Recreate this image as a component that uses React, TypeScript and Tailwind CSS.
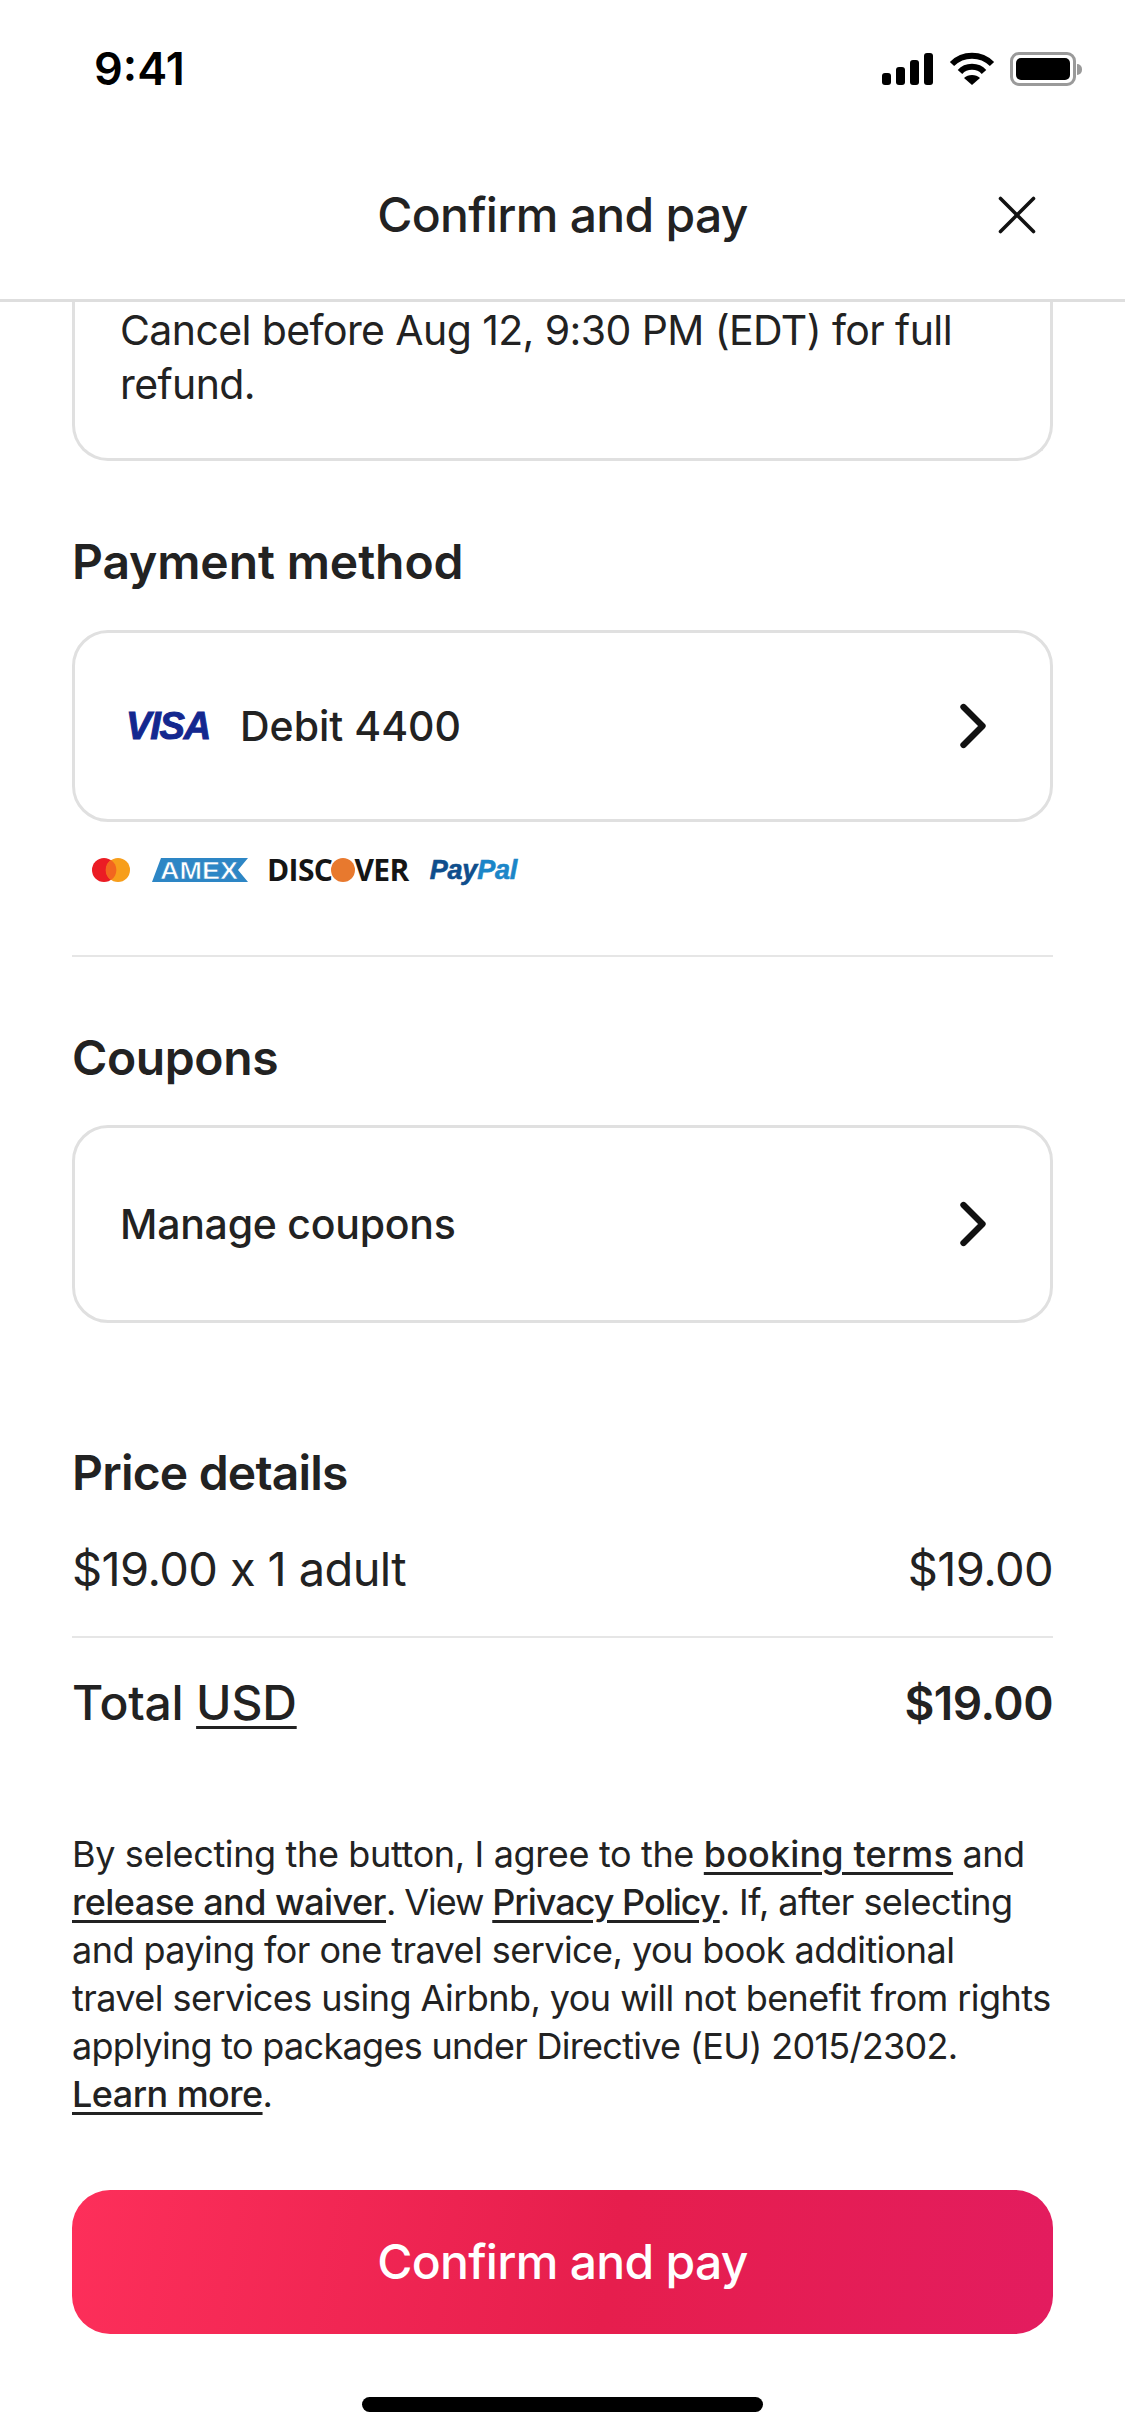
import React from 'react';
import { ChevronRight, X } from 'lucide-react';

const font = 'font-["Inter",sans-serif]';
const link = 'font-medium underline underline-offset-[5px] decoration-[3px]';

function StatusIcons() {
  return (
    <div className="flex items-center gap-[15px]">
      <svg width="52" height="32" viewBox="0 0 52 32" fill="#000">
        <rect x="0" y="20" width="9" height="12" rx="3" />
        <rect x="14" y="14" width="9" height="18" rx="3" />
        <rect x="28" y="7" width="9" height="25" rx="3" />
        <rect x="42" y="0" width="9" height="32" rx="3" />
      </svg>
      <svg width="46" height="34" viewBox="0 0 46 34" fill="none" stroke="#000" strokeWidth="6">
        <path d="M3 12 C14 1 32 1 43 12" />
        <path d="M11 20 C17 13 29 13 35 20" />
        <path d="M23 33 L15 26 C19 22 27 22 31 26 Z" fill="#000" stroke="none" />
      </svg>
      <div className="flex items-center">
        <div className="w-[66px] h-[34px] rounded-[9px] border-[3px] border-[#9a9a9a] p-[3px]">
          <div className="w-full h-full bg-black rounded-[5px]" />
        </div>
        <div className="w-[5px] h-[11px] bg-[#9a9a9a] rounded-r-full ml-[1px]" />
      </div>
    </div>
  );
}

function VisaLogo() {
  return (
    <span className='w-[84px] text-[#14288f] italic font-bold text-[38px] leading-none tracking-[-1.2px] [-webkit-text-stroke:1px_#14288f] font-["Liberation_Sans",sans-serif]'>
      VISA
    </span>
  );
}

function CardLogos() {
  return (
    <div className="flex items-center pl-[20px] pt-[33px]">
      <svg width="38" height="24" viewBox="0 0 38 24" className="mr-[22px]">
        <circle cx="12" cy="12" r="12" fill="#eb1c24" />
        <circle cx="26" cy="12" r="12" fill="#f79e1b" />
        <path d="M19 2 a12 12 0 0 1 0 20 a12 12 0 0 1 0 -20" fill="#f2661f" />
      </svg>
      <svg width="96" height="24" viewBox="0 0 96 24" className="mr-[19px]">
        <path d="M9 0 H96 L86 12 L96 24 H0 Z" fill="#2d86c5" />
        <text x="47" y="20.5" textAnchor="middle" fontFamily="Liberation Sans" fontWeight="700" fontSize="23" fill="#fff" stroke="#2d86c5" strokeWidth="0.6" textLength="78" lengthAdjust="spacingAndGlyphs">AMEX</text>
      </svg>
      <span className='flex items-center text-[#151515] font-bold text-[30px] leading-none tracking-[-0.6px] font-["Open_Sans",sans-serif] mr-[21px]'>
        DISC
        <span className="w-[24px] h-[24px] rounded-full bg-[#e8792e] mx-[-1px]" />
        VER
      </span>
      <span className='italic font-bold text-[27px] leading-none tracking-[-0.2px] [-webkit-text-stroke:0.6px] font-["Liberation_Sans",sans-serif]'>
        <span className="text-[#0f4e8c]">Pay</span>
        <span className="text-[#1b86c8]">Pal</span>
      </span>
    </div>
  );
}

function LinkRow({ children, height }: { children: React.ReactNode; height: string }) {
  return (
    <div className={`${height} flex items-center justify-between rounded-[36px] border-[3px] border-[#e0e0e0] pr-[39px]`}>
      <div className="flex items-center">{children}</div>
      <ChevronRight size={76} strokeWidth={2} color="#111" />
    </div>
  );
}

export default function App() {
  return (
    <div className={`${font} w-[1125px] h-[2436px] bg-white flex flex-col overflow-hidden text-[#222]`}>
      <div className="h-[126px] pt-[44px] pl-[94px] pr-[43px] flex justify-between items-start">
        <span className="text-black text-[45px] leading-[50px] font-semibold">9:41</span>
        <div className="pt-[8px]">
          <StatusIcons />
        </div>
      </div>

      <header className="h-[176px] border-b-[3px] border-[#dedede] flex items-center justify-center relative pt-[4px]">
        <h1 className="text-[48px] leading-none font-medium tracking-[-0.7px]">Confirm and pay</h1>
        <X size={66} strokeWidth={1.3} color="#111" className="absolute right-[75px] top-[56px]" />
      </header>

      <main className="px-[72px] flex flex-col">
        <div className="h-[159px] rounded-b-[36px] border-x-[3px] border-b-[3px] border-[#e0e0e0] pl-[45px] pt-[1px] text-[41px] leading-[54px] tracking-[-0.6px]">
          Cancel before Aug 12, 9:30 PM (EDT) for full
          <br />
          refund.
        </div>

        <h2 className="mt-[73px] text-[48px] leading-[56px] font-semibold tracking-[-0.1px]">Payment method</h2>
        <div className="mt-[40px]">
          <LinkRow height="h-[192px]">
            <div className="pl-[51px] flex items-center">
              <VisaLogo />
              <span className="ml-[30px] text-[41px] leading-none font-medium">Debit 4400</span>
            </div>
          </LinkRow>
        </div>
        <CardLogos />

        <div className="mt-[70px] h-[2px] bg-[#e6e6e6]" />

        <h2 className="mt-[73px] text-[48px] leading-[56px] font-semibold tracking-[-0.4px]">Coupons</h2>
        <div className="mt-[39px]">
          <LinkRow height="h-[198px]">
            <span className="pl-[45px] text-[41px] leading-none font-medium tracking-[-0.25px]">Manage coupons</span>
          </LinkRow>
        </div>

        <h2 className="mt-[122px] text-[48px] leading-[56px] font-semibold tracking-[-0.8px]">Price details</h2>
        <div className="mt-[40px] flex justify-between text-[47px] leading-[56px] tracking-[-0.6px]">
          <span>$19.00 x 1 adult</span>
          <span>$19.00</span>
        </div>
        <div className="mt-[39px] h-[2px] bg-[#e6e6e6]" />
        <div className="mt-[37px] flex justify-between text-[46px] leading-[56px] font-semibold tracking-[-0.5px]">
          <span className="text-[48px] font-medium tracking-[-0.2px]">
            Total <span className="underline underline-offset-[6px] decoration-[3px]">USD</span>
          </span>
          <span>$19.00</span>
        </div>

        <p className="mt-[99px] text-[36px] leading-[48px] tracking-[-0.55px] whitespace-nowrap">
          <span className="tracking-[-0.35px]">By selecting the button, I agree to the </span>
          <a className={`${link} tracking-[0.15px]`}>booking terms</a> and
          <br />
          <a className={link}>release and waiver</a>
          <span className="tracking-[-1.1px]">. View </span>
          <a className={`${link} tracking-[-1px]`}>Privacy Policy</a>. If, after selecting
          <br />
          and paying for one travel service, you book additional
          <br />
          travel services using Airbnb, you will not benefit from rights
          <br />
          <span className="tracking-[-0.7px]">applying to packages under Directive (EU) 2015/2302.</span>
          <br />
          <a className={link}>Learn more</a>.
        </p>

        <button className="mt-[72px] h-[144px] rounded-[38px] bg-[linear-gradient(100deg,#fd2f5a_0%,#e61e4d_55%,#e31c5f_100%)] text-white text-[48px] font-medium tracking-[-0.7px]">
          Confirm and pay
        </button>
      </main>

      <div className="mt-[63px] flex justify-center">
        <div className="w-[401px] h-[15px] rounded-full bg-black" />
      </div>
    </div>
  );
}
